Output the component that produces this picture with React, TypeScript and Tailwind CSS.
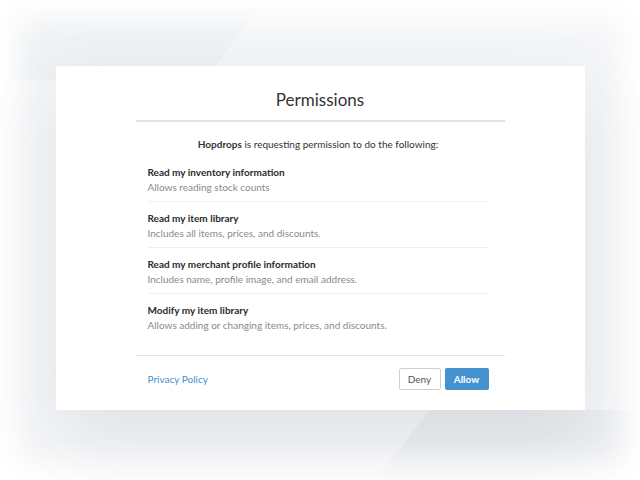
import React from 'react';

const permissions = [
  { title: 'Read my inventory information', desc: 'Allows reading stock counts' },
  { title: 'Read my item library', desc: 'Includes all items, prices, and discounts.' },
  { title: 'Read my merchant profile information', desc: 'Includes name, profile image, and email address.' },
  { title: 'Modify my item library', desc: 'Allows adding or changing items, prices, and discounts.' },
];

const Backdrop = () => (
  <svg className="absolute inset-0 h-full w-full" viewBox="0 0 640 480" preserveAspectRatio="none">
    <rect width="640" height="480" fill="#f5f6f8" />
    <polygon points="0,0 265,0 205,80 0,80" fill="#eff1f3" />
    <polygon points="430,410 640,410 640,480 375,480" fill="#eceef1" />
  </svg>
);

const App = () => {
  return (
    <div className="relative h-[480px] w-[640px] overflow-hidden font-['Lato',sans-serif]">
      <Backdrop />
      <div className="pointer-events-none absolute inset-0 shadow-[inset_0_0_30px_18px_#ffffff]" />
      <div className="relative flex h-full items-start justify-center pt-[66px]">
        <div className="flex h-[344px] w-[529px] flex-col bg-white px-[80px] shadow-[0_28px_70px_rgba(40,50,60,0.10)]">
          <h1 className="pt-[22px] pb-[8px] text-center text-[17px] leading-6 text-[#333]">Permissions</h1>
          <div className="h-[2px] bg-[#e2e2e2]" />

          <div className="pl-[12px] pr-[16px]">
            <p className="mt-[14px] text-center text-[10px] leading-4 text-[#333]">
              <span className="font-bold">Hopdrops</span> is requesting permission to do the following:
            </p>
            <ul className="mt-[4px]">
              {permissions.map((p, i) => (
                <li
                  key={p.title}
                  className={`pt-[9px] pb-[7px] ${i < permissions.length - 1 ? 'border-b border-[#f0f0f0]' : ''}`}
                >
                  <div className="text-[10px] font-bold leading-[15px] text-[#2b2b2b]">{p.title}</div>
                  <div className="text-[10px] leading-[14px] text-[#8a8a8a]">{p.desc}</div>
                </li>
              ))}
            </ul>
          </div>

          <div className="mt-[16px] h-px bg-[#e4e4e4]" />

          <div className="flex items-center justify-between pl-[12px] pr-[16px] pt-[12px]">
            <a href="#" className="text-[10px] text-[#3b8fd0]">Privacy Policy</a>
            <div className="flex gap-[4px]">
              <button className="h-[22px] w-[42px] rounded-[2px] border border-[#d0d0d0] bg-white text-[10px] text-[#555]">
                Deny
              </button>
              <button className="h-[22px] w-[44px] rounded-[2px] bg-[#4592d0] text-[10px] font-bold text-white">
                Allow
              </button>
            </div>
          </div>
        </div>
      </div>
    </div>
  );
};

export default App;
